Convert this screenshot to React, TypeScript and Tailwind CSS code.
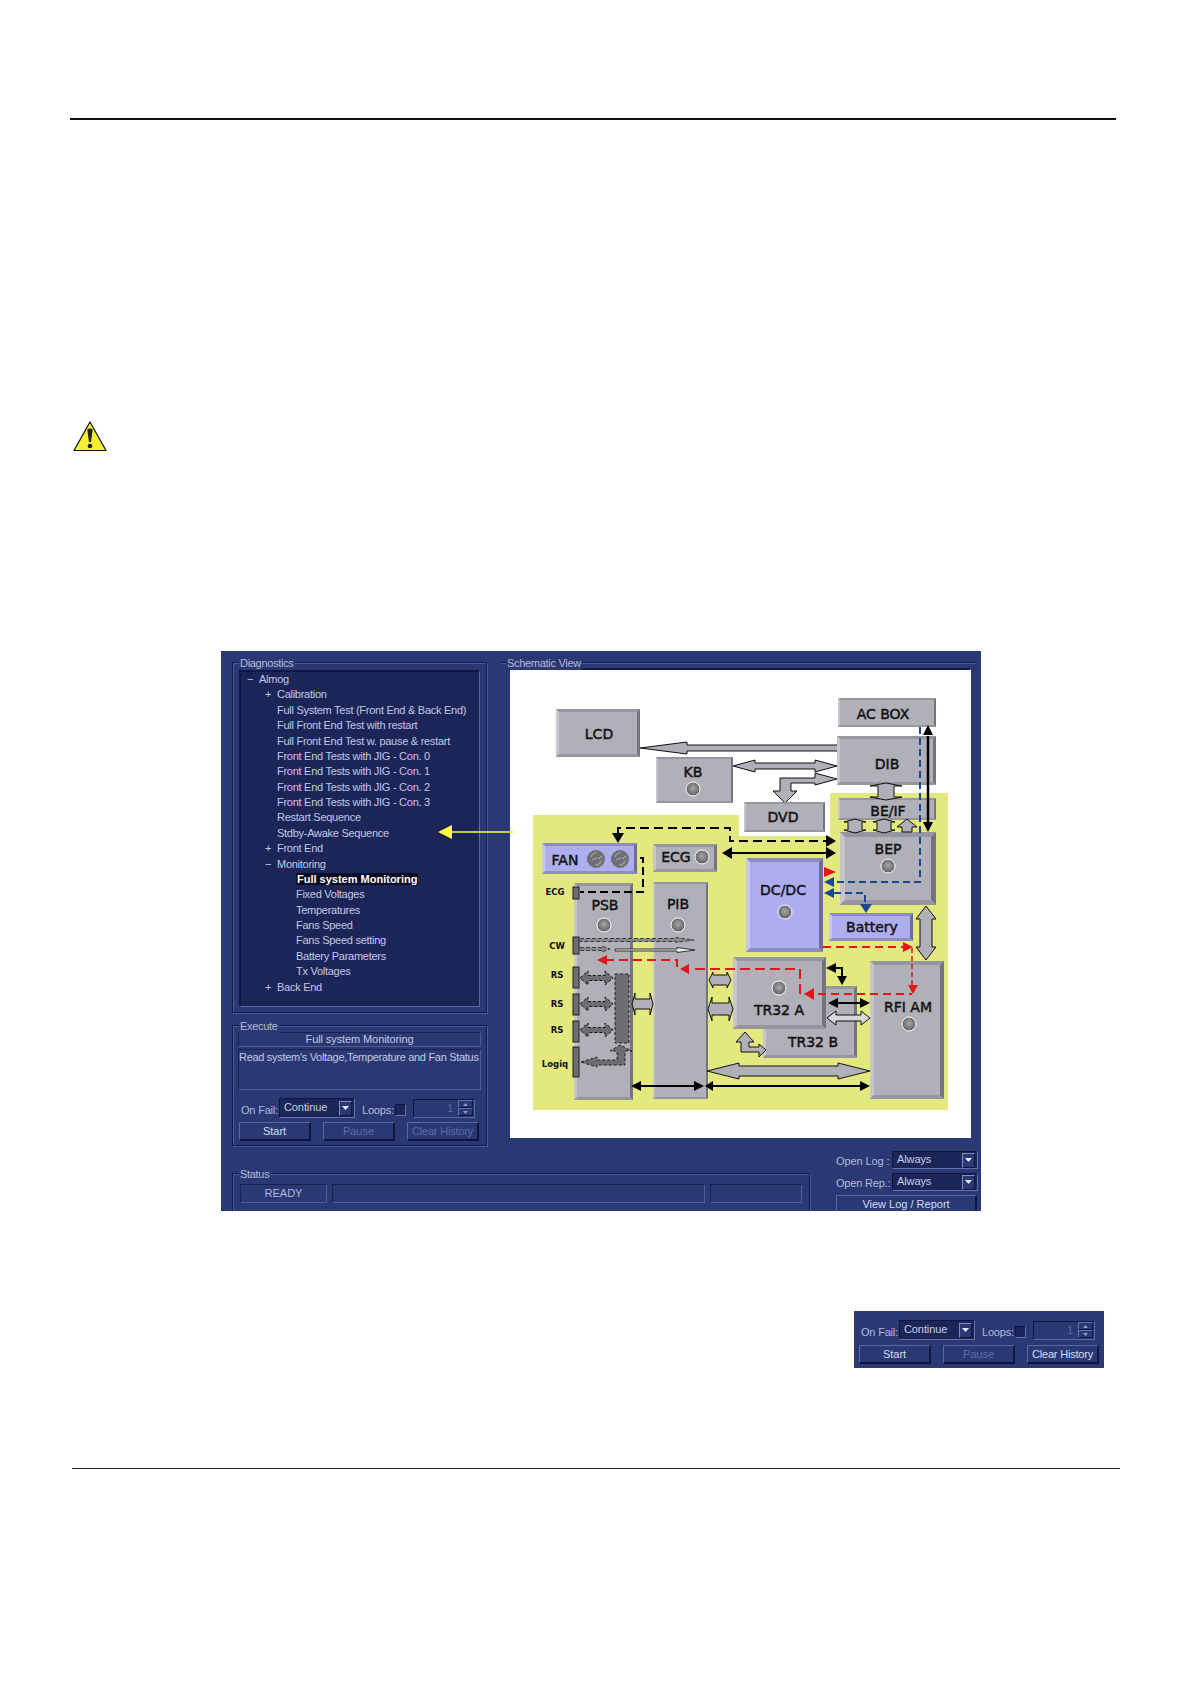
import React from "react";

const FONT = "font-['Liberation_Sans',Arial,sans-serif]";

type P = { x: number; y: number; w: number; h: number; b?: number; fill?: string; light?: string; dark?: string; mid?: string };
function Box({ x, y, w, h, b = 3, fill = "#b0b0b8", light = "#c6c6cc", dark = "#74747c", mid = "#96969e" }: P) {
  const r = x + w, d = y + h;
  return (
    <g>
      <rect x={x} y={y} width={w} height={h} fill={fill} />
      <polygon points={`${x},${y} ${r},${y} ${r - b},${y + b} ${x + b},${y + b}`} fill={mid} />
      <polygon points={`${x},${y} ${x + b},${y + b} ${x + b},${d - b} ${x},${d}`} fill={light} />
      <polygon points={`${r},${y} ${r},${d} ${r - b},${d - b} ${r - b},${y + b}`} fill={dark} />
      <polygon points={`${x},${d} ${r},${d} ${r - b},${d - b} ${x + b},${d - b}`} fill={mid} />
    </g>
  );
}
const Led = ({ x, y }: { x: number; y: number }) => (
  <circle cx={x} cy={y} r={7} fill="url(#led)" stroke="#fff" strokeWidth={1} />
);
const Fan = ({ x, y }: { x: number; y: number }) => (
  <g>
    <circle cx={x} cy={y} r={9} fill="#6f6f74" />
    <path d={`M${x - 5} ${y - 2} A6 6 0 0 1 ${x + 1} ${y - 6} M${x + 5} ${y + 2} A6 6 0 0 1 ${x - 1} ${y + 6} M${x - 4} ${y + 1} L${x + 1} ${y - 1} M${x + 6} ${y - 3} L${x + 2} ${y}`} stroke="#a5a5a8" strokeWidth={1.2} fill="none" />
  </g>
);
const Label = ({ x, y, t, s = 14, w = 400, st = 0.45 }: { x: number; y: number; t: string; s?: number; w?: number; st?: number }) => (
  <text x={x} y={y} fontSize={s} fontWeight={w} textAnchor="middle" fill="#111" stroke="#111" strokeWidth={st} fontFamily="'DejaVu Sans',sans-serif">{t}</text>
);
const Small = ({ x, y, t }: { x: number; y: number; t: string }) => <Label x={x} y={y} t={t} s={8.5} w={700} st={0} />;

// block arrow along a line, heads at the chosen ends
function Block({ x1, y1, x2, y2, sh = 3, hw = 6, hl = 12, a = true, c = true, fill = "#b0b0b8", stroke = "#111", sw = 1, dash }: { x1: number; y1: number; x2: number; y2: number; sh?: number; hw?: number; hl?: number; a?: boolean; c?: boolean; fill?: string; stroke?: string; sw?: number; dash?: string }) {
  const len = Math.hypot(x2 - x1, y2 - y1);
  const ang = (Math.atan2(y2 - y1, x2 - x1) * 180) / Math.PI;
  const pts: string[] = [];
  if (a) pts.push(`0,0 ${hl},${-hw} ${hl},${-sh}`); else pts.push(`0,${-sh}`);
  if (c) pts.push(`${len - hl},${-sh} ${len - hl},${-hw} ${len},0 ${len - hl},${hw} ${len - hl},${sh}`); else pts.push(`${len},${-sh} ${len},${sh}`);
  if (a) pts.push(`${hl},${sh} ${hl},${hw}`); else pts.push(`0,${sh}`);
  return (
    <g transform={`translate(${x1} ${y1}) rotate(${ang})`}>
      <polygon points={pts.join(" ")} fill={fill} stroke={stroke} strokeWidth={sw} strokeDasharray={dash} />
    </g>
  );
}
function Tri({ x, y, dir, c = "#000", s = 6, l = 10 }: { x: number; y: number; dir: "l" | "r" | "u" | "d"; c?: string; s?: number; l?: number }) {
  const pts =
    dir === "r" ? `${x},${y} ${x - l},${y - s} ${x - l},${y + s}` :
    dir === "l" ? `${x},${y} ${x + l},${y - s} ${x + l},${y + s}` :
    dir === "u" ? `${x},${y} ${x - s},${y + l} ${x + s},${y + l}` :
    `${x},${y} ${x - s},${y - l} ${x + s},${y - l}`;
  return <polygon points={pts} fill={c} />;
}
const Line = ({ d, c = "#000", w = 2, dash }: { d: string; c?: string; w?: number; dash?: string }) => (
  <path d={d} fill="none" stroke={c} strokeWidth={w} strokeDasharray={dash} />
);
const LAV = { fill: "#aeaeee", light: "#c8c8f0", dark: "#6c6c9c", mid: "#8c8cc0" };
const DGR = "#6e6e72";

function Schematic() {
  return (
    <svg width={461} height={468} viewBox="510 670 461 468" className="block">
      <defs>
        <radialGradient id="led" cx="50%" cy="45%" r="55%">
          <stop offset="0%" stopColor="#a8a8a8" />
          <stop offset="100%" stopColor="#5c5c60" />
        </radialGradient>
      </defs>
      <rect x={510} y={670} width={461} height={468} fill="#fff" />
      <polygon points="533,815 739,815 739,836 830,836 830,793 948,793 948,1110 533,1110" fill="#e3e97e" />

      {/* grey block arrows between top units */}
      <Block x1={640} y1={748} x2={838} y2={748} sh={3} hw={6} hl={47} c={false} />
      <Block x1={733} y1={766} x2={837} y2={766} sh={3} hw={6} hl={22} />
      <path d="M785 803 L773 791 L780 791 L780 778 L815 778 L815 773 L837 779 L815 785 L815 783 L791 783 L791 791 L797 791 Z" fill="#b0b0b8" stroke="#111" strokeWidth={1} />

      <Box x={838} y={698} w={98} h={29} b={2} />
      <Box x={837} y={736} w={99} h={49} b={3} />
      <Box x={838} y={798} w={98} h={22} b={2} />
      <Box x={556} y={709} w={84} h={48} b={3} />
      <Box x={656} y={757} w={77} h={46} b={2} />
      <Box x={744} y={802} w={81} h={30} b={2} />
      <Box x={840} y={832} w={96} h={73} b={5} />

      <Box x={542} y={843} w={95} h={31} b={3} {...LAV} />
      <Box x={653} y={844} w={64} h={28} b={3} />
      <Box x={574} y={883} w={59} h={217} b={3} />
      <Box x={653} y={882} w={55} h={217} b={2} />
      <Box x={746} y={858} w={77} h={94} b={4} {...LAV} />
      <Box x={829} y={913} w={84} h={28} b={3} {...LAV} />
      <Box x={763} y={986} w={94} h={72} b={3} />
      <Box x={733} y={957} w={93} h={72} b={4} />
      <Box x={870} y={961} w={74} h={138} b={4} />

      <Label x={599} y={739} t="LCD" />
      <Label x={693} y={777} t="KB" />
      <Label x={883} y={719} t="AC BOX" />
      <Label x={887} y={769} t="DIB" />
      <Label x={888} y={816} t="BE/IF" />
      <Label x={783} y={822} t="DVD" />
      <Label x={888} y={854} t="BEP" />
      <Label x={565} y={865} t="FAN" />
      <Label x={676} y={862} t="ECG" />
      <Label x={605} y={910} t="PSB" />
      <Label x={678} y={909} t="PIB" />
      <Label x={783} y={895} t="DC/DC" />
      <Label x={872} y={932} t="Battery" />
      <Label x={779} y={1015} t="TR32 A" />
      <Label x={813} y={1047} t="TR32 B" />
      <Label x={908} y={1012} t="RFI AM" />
      <Small x={555} y={895} t="ECG" />
      <Small x={557} y={949} t="CW" />
      <Small x={557} y={978} t="RS" />
      <Small x={557} y={1007} t="RS" />
      <Small x={557} y={1033} t="RS" />
      <Small x={555} y={1067} t="Logiq" />

      <Led x={693} y={789} />
      <Led x={702} y={857} />
      <Led x={604} y={925} />
      <Led x={678} y={925} />
      <Led x={785} y={912} />
      <Led x={888} y={866} />
      <Led x={779} y={988} />
      <Led x={909} y={1024} />
      <Fan x={596} y={859} />
      <Fan x={620} y={859} />

      {/* connectors */}
      <Block x1={886} y1={783} x2={886} y2={800} sh={8} hw={16} hl={3} />
      <Block x1={855} y1={819} x2={855} y2={833} sh={7} hw={11} hl={3} />
      <Block x1={884} y1={819} x2={884} y2={833} sh={7} hw={11} hl={3} />
      <polygon points="907,819 917,827 912,827 912,832 902,832 902,827 897,827" fill="#b0b0b8" stroke="#111" />

      <Line d="M928 736 V822" w={2.5} />
      <Tri x={928} y={725} dir="u" s={5} l={10} />
      <Tri x={928} y={832} dir="d" s={5} l={10} />
      <Line d="M920 727 V882 H834" c="#1d4691" dash="7 4" />
      <Tri x={824} y={882} dir="l" c="#1d4691" s={5} l={10} />
      <Line d="M834 893 H865 V903" c="#1d4691" dash="7 4" />
      <Tri x={824} y={893} dir="l" c="#1d4691" s={5} l={10} />
      <Tri x={866} y={913} dir="d" c="#1d4691" s={6} l={9} />

      <Line d="M618 834 V828 H730 V841 H826" dash="9 5" />
      <Tri x={618} y={843} dir="d" s={6} l={10} />
      <Tri x={836} y={841} dir="r" s={6} l={10} />
      <Line d="M727 853 H826" />
      <Tri x={836} y={853} dir="r" s={6} l={10} />
      <Tri x={722} y={853} dir="l" s={6} l={10} />
      <Tri x={836} y={872} dir="r" c="#e8141c" s={5} l={12} />
      <Line d="M640 858 H643 V892 H580" dash="8 4" />

      {/* ports */}
      <rect x={573} y={887} width={6} height={12} fill={DGR} stroke="#222" />
      <rect x={573} y={937} width={6} height={17} fill={DGR} stroke="#222" />
      <rect x={573} y={967} width={6} height={21} fill={DGR} stroke="#222" />
      <rect x={573} y={994} width={6} height={21} fill={DGR} stroke="#222" />
      <rect x={573} y={1021} width={6} height={21} fill={DGR} stroke="#222" />
      <rect x={573} y={1047} width={6} height={30} fill={DGR} stroke="#222" />
      <rect x={615} y={974} width={14} height={69} fill={DGR} stroke="#222" strokeDasharray="3 2" />

      <Block x1={580} y1={978} x2={613} y2={978} sh={2.5} hw={7} hl={8} fill={DGR} dash="3 2" />
      <Block x1={580} y1={1004} x2={613} y2={1004} sh={2.5} hw={7} hl={8} fill={DGR} dash="3 2" />
      <Block x1={580} y1={1030} x2={613} y2={1030} sh={2.5} hw={7} hl={8} fill={DGR} dash="3 2" />
      <Block x1={580} y1={940} x2={694} y2={940} sh={1.5} hw={2.5} hl={18} a={false} fill="#8a8a8e" sw={0.7} dash="4 2" />
      <Block x1={580} y1={949} x2={610} y2={949} sh={1.5} hw={3} hl={8} a={false} fill="#8a8a8e" sw={0.7} dash="4 2" />
      <Block x1={615} y1={950} x2={695} y2={950} sh={1} hw={2.5} hl={18} a={false} fill="#e8e8e8" sw={0.8} />
      <polygon points="581,1062 597,1057 597,1060 617,1060 617,1051 610,1051 620,1045 632,1051 625,1051 625,1065 597,1065 597,1067" fill={DGR} stroke="#222" strokeDasharray="3 2" />

      <Block x1={632} y1={1004} x2={653} y2={1004} sh={5} hw={11} hl={3} />
      <Block x1={709} y1={980} x2={731} y2={980} sh={5} hw={8} hl={4} />
      <Block x1={708} y1={1009} x2={733} y2={1009} sh={6} hw={12} hl={4} />
      <Block x1={707} y1={1071} x2={870} y2={1071} sh={5} hw={8} hl={32} />
      <polygon points="745,1032 736,1042 741,1042 741,1052 759,1052 759,1057 766,1050 759,1044 759,1047 749,1047 749,1042 754,1042" fill="#b0b0b8" stroke="#111" />
      <Block x1={926} y1={906} x2={926} y2={960} sh={6} hw={10} hl={13} />
      <Block x1={827} y1={1018} x2={870} y2={1018} sh={3} hw={7} hl={9} fill="#d8d8dc" />

      <Line d="M640 1086 H695" />
      <Tri x={631} y={1086} dir="l" s={5} l={10} />
      <Tri x={704} y={1086} dir="r" s={5} l={10} />
      <Line d="M712 1086 H860" />
      <Tri x={705} y={1086} dir="l" s={5} l={8} />
      <Tri x={870} y={1086} dir="r" s={5} l={10} />
      <Line d="M836 968 H842 V977" />
      <Tri x={826} y={968} dir="l" s={5} l={10} />
      <Tri x={842} y={985} dir="d" s={5} l={9} />
      <Line d="M836 1003 H862" />
      <Tri x={828} y={1003} dir="l" s={5} l={10} />
      <Tri x={870} y={1003} dir="r" s={5} l={10} />

      {/* red dashed */}
      <Line d="M823 947 H905" c="#e8141c" dash="8 5" />
      <Tri x={913} y={947} dir="r" c="#e8141c" s={5} l={10} />
      <Line d="M912 948 V985" c="#e8141c" dash="5 3" w={1.5} />
      <Tri x={913} y={994} dir="d" c="#e8141c" s={5} l={9} />
      <Line d="M805 994 H912" c="#e8141c" dash="8 5" />
      <Tri x={804} y={994} dir="l" c="#e8141c" s={6} l={10} />
      <Line d="M800 994 V969 H690" c="#e8141c" dash="10 5" />
      <Tri x={680} y={969} dir="l" c="#e8141c" s={5} l={9} />
      <Line d="M605 960 H677 V968" c="#e8141c" dash="9 5" />
      <Tri x={597} y={960} dir="l" c="#e8141c" s={5} l={10} />
    </svg>
  );
}

const Group = ({ title, className, children }: { title: string; className: string; children?: React.ReactNode }) => (
  <div className={`relative border border-[#111a4c] shadow-[inset_1px_1px_0_#4c5a98,1px_1px_0_#4c5a98] ${className}`}>
    <span className="absolute left-[6px] top-[-6px] bg-[#2a3874] px-px text-[11px] leading-[13px] tracking-[-0.3px] text-[#b4bad9]">{title}</span>
    {children}
  </div>
);

type Row = { t: string; x: number; m?: "+" | "-"; mx?: number; sel?: boolean };
const ROWS: Row[] = [
  { t: "Almog", x: 20, m: "-", mx: 7 },
  { t: "Calibration", x: 38, m: "+", mx: 25 },
  { t: "Full System Test (Front End & Back End)", x: 38 },
  { t: "Full Front End Test with restart", x: 38 },
  { t: "Full Front End Test w. pause & restart", x: 38 },
  { t: "Front End Tests with JIG - Con. 0", x: 38 },
  { t: "Front End Tests with JIG - Con. 1", x: 38 },
  { t: "Front End Tests with JIG - Con. 2", x: 38 },
  { t: "Front End Tests with JIG - Con. 3", x: 38 },
  { t: "Restart Sequence", x: 38 },
  { t: "Stdby-Awake Sequence", x: 38 },
  { t: "Front End", x: 38, m: "+", mx: 25 },
  { t: "Monitoring", x: 38, m: "-", mx: 25 },
  { t: "Full system Monitoring", x: 57, sel: true },
  { t: "Fixed Voltages", x: 57 },
  { t: "Temperatures", x: 57 },
  { t: "Fans Speed", x: 57 },
  { t: "Fans Speed setting", x: 57 },
  { t: "Battery Parameters", x: 57 },
  { t: "Tx Voltages", x: 57 },
  { t: "Back End", x: 38, m: "+", mx: 25 },
];

function Tree() {
  return (
    <div className="relative mx-[6px] mt-[7px] h-[337px] border border-[#5c69a4] border-t-[#0f1744] border-l-[#0f1744] border-t-2 border-l-2 bg-[#1b2558]">
      {ROWS.map((r) => (
        <div key={r.t} className="relative h-[15.38px] whitespace-nowrap text-[11px] leading-[15px] tracking-[-0.27px] text-[#c3c8e4]" style={{ paddingLeft: r.x - 2 }}>
          {r.m && (
            <span className="absolute top-0 text-[11px] text-[#c3c8e4]" style={{ left: r.mx! - 1 }}>{r.m === "-" ? "−" : "+"}</span>
          )}
          {r.sel ? <span className="bg-[#070b24] px-px font-bold tracking-[0] text-white">{r.t}</span> : r.t}
        </div>
      ))}
    </div>
  );
}

const Sunken = ({ className, children }: { className: string; children?: React.ReactNode }) => (
  <div className={`border border-[#17214f] border-r-[#4f5c98] border-b-[#4f5c98] ${className}`}>{children}</div>
);

const Btn = ({ t, dim, className = "" }: { t: string; dim?: boolean; className?: string }) => (
  <div className={`flex h-[19px] items-center justify-center border border-[#5a68a6] border-r-2 border-b-2 border-r-[#0e1540] border-b-[#0e1540] bg-[#2a3874] text-[11px] ${dim ? "text-[#5f6ca4]" : "text-[#d8dcf0]"} ${className}`}>{t}</div>
);

const Caret = () => (
  <span className="flex h-[15px] w-[13px] items-center justify-center border border-[#7f8cc2] border-r-[#0e1540] border-b-[#0e1540] bg-[#2a3874]">
    <svg width="7" height="4" viewBox="0 0 7 4"><polygon points="0,0 7,0 3.5,4" fill="#e8ebf8" /></svg>
  </span>
);

const Select = ({ t, className }: { t: string; className: string }) => (
  <div className={`flex items-center justify-between border border-[#0e1540] border-r-[#6573ad] border-b-[#6573ad] bg-[#1b2558] pl-[4px] pr-[2px] text-[11px] tracking-[-0.1px] text-[#c9cee8] ${className}`}>
    <span className="pb-[2px]">{t}</span>
    <Caret />
  </div>
);

function Controls({ clear }: { clear?: boolean }) {
  return (
    <div className="w-[240px]">
      <div className="flex h-[20px] items-center">
        <span className="w-[40px] pl-[2px] pt-[4px] text-[11px] tracking-[-0.2px] text-[#b4bad9]">On Fail:</span>
        <Select t="Continue" className="h-[20px] w-[76px]" />
        <span className="ml-[7px] w-[33px] pt-[4px] text-[11px] tracking-[-0.2px] text-[#b4bad9]">Loops:</span>
        <span className="mt-[3px] h-[12px] w-[11px] border border-[#0e1540] border-r-[#6573ad] border-b-[#6573ad] bg-[#1b2558]" />
        <div className="ml-[7px] flex h-[19px] w-[62px] items-center justify-end border border-[#0e1540] border-r-[#5a68a6] border-b-[#5a68a6] pr-[1px] text-[11px] text-[#5f6ca4]">
          <span className="mr-[5px]">1</span>
          <span className="flex flex-col">
            <span className="flex h-[8px] w-[15px] items-center justify-center border border-[#6573ad] border-r-[#0e1540] border-b-[#0e1540]"><svg width="5" height="3" viewBox="0 0 5 3"><polygon points="0,3 5,3 2.5,0" fill="#8f9ac8" /></svg></span>
            <span className="flex h-[8px] w-[15px] items-center justify-center border border-[#6573ad] border-r-[#0e1540] border-b-[#0e1540]"><svg width="5" height="3" viewBox="0 0 5 3"><polygon points="0,0 5,0 2.5,3" fill="#8f9ac8" /></svg></span>
          </span>
        </div>
      </div>
      <div className={`${clear ? "mt-[5px]" : "mt-[4px]"} flex gap-[12px]`}>
        <Btn t="Start" className="w-[72px]" />
        <Btn t="Pause" dim className="w-[72px]" />
        <Btn t="Clear History" dim={!clear} className="w-[72px] tracking-[-0.2px]" />
      </div>
    </div>
  );
}

function Panel() {
  return (
    <div className="relative ml-[221px] mt-[198px] h-[560px] w-[760px] overflow-hidden bg-[#2a3874]">
      <div className="flex pl-[11px] pt-[11px]">
        <div className="w-[255px]">
          <Group title="Diagnostics" className="h-[351px]"><Tree /></Group>
          <Group title="Execute" className="mt-[12px] h-[121px] border-t px-[5px] pt-[6px]">
            <Sunken className="flex h-[15px] items-center justify-center text-[11px] tracking-[-0.1px] text-[#c3c8e4]">Full system Monitoring</Sunken>
            <Sunken className="mt-[2px] h-[41px] text-[11px] leading-[15px] tracking-[-0.3px] whitespace-nowrap text-[#c3c8e4]">Read system's Voltage,Temperature and Fan Status</Sunken>
            <div className="ml-[1px] mt-[8px]"><Controls /></div>
          </Group>
        </div>
        {/* the schematic frame has only a top rule; the white area sits under it */}
        <div className="relative ml-[15px] h-[484px] w-[474px] border-t border-[#111a4c] pl-[8px] pt-[5px] shadow-[inset_0_1px_0_#4c5a98]">
          <span className="absolute left-[4px] top-[-6px] bg-[#2a3874] px-px text-[11px] leading-[13px] tracking-[-0.3px] text-[#b4bad9]">Schematic View</span>
          <div className="w-fit border-2 border-[#0f1744] border-r-[#5c69a4] border-b-[#5c69a4]">
            <div className="-m-[2px] -mt-[0px]"><Schematic /></div>
          </div>
        </div>
      </div>
      <div className="flex pl-[11px]">
        <Group title="Status" className="mt-[27px] h-[60px] w-[578px]">
          <div className="ml-[7px] mt-[10px] flex gap-[5px]">
            <Sunken className="flex h-[19px] w-[87px] items-center justify-center text-[11px] text-[#b4bad9]">READY</Sunken>
            <Sunken className="h-[19px] w-[373px]" />
            <Sunken className="h-[19px] w-[92px]" />
          </div>
        </Group>
        <div className="ml-[26px] mt-[5px] w-[142px]">
          <div className="flex h-[18px] items-center justify-between">
            <span className="pt-[3px] text-[11px] tracking-[-0.1px] text-[#b4bad9]">Open Log :</span>
            <Select t="Always" className="h-[18px] w-[86px]" />
          </div>
          <div className="mt-[4px] flex h-[18px] items-center justify-between">
            <span className="pt-[3px] text-[11px] tracking-[-0.2px] text-[#b4bad9]">Open Rep.:</span>
            <Select t="Always" className="h-[18px] w-[86px]" />
          </div>
          <Btn t="View Log / Report" className="mt-[4px] w-[141px]" />
        </div>
      </div>
      <svg width="76" height="14" viewBox="0 0 76 14" className="absolute left-[217px] top-[174px]">
        <line x1="12" y1="7" x2="76" y2="7" stroke="#ffff40" strokeWidth="1.5" />
        <polygon points="0,7 14,0 14,14" fill="#ffff40" />
      </svg>
    </div>
  );
}

export default function App() {
  return (
    <div className={`relative h-[1684px] w-[1190px] overflow-hidden bg-white ${FONT}`}>
      <div className="ml-[70px] mt-[118px] h-[2px] w-[1046px] bg-[#111]" />
      <div className="ml-[73px] mt-[301px] h-[32px]">
        <svg width="34" height="31" viewBox="0 0 34 31">
          <polygon points="17,1 33,29.5 1,29.5" fill="#f4f032" stroke="#111" strokeWidth="1.2" />
          <path d="M14.3 8.5 Q17 6.5 19.7 8.5 L18 21 H16 Z" fill="#222" />
          <circle cx="17" cy="25" r="2.3" fill="#222" />
        </svg>
      </div>
      <Panel />
      <div className="ml-[854px] mt-[100px] h-[57px] w-[250px] bg-[#2a3874] pl-[5px] pt-[9px]">
        <Controls clear />
      </div>
      <div className="ml-[72px] mt-[100px] h-px w-[1048px] bg-[#222]" />
    </div>
  );
}
